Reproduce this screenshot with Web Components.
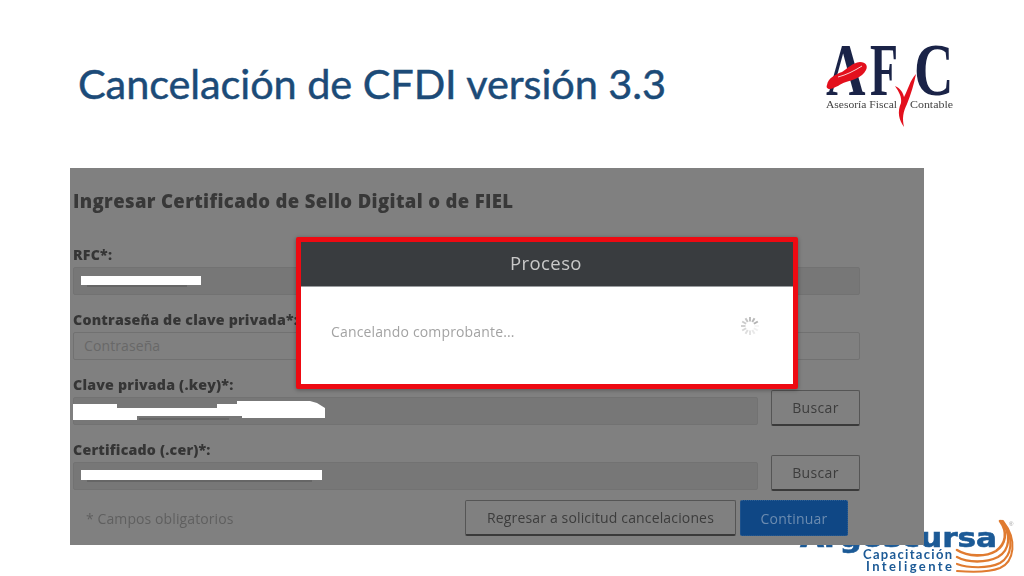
<!DOCTYPE html>
<html lang="es">
<head>
<meta charset="utf-8">
<title>Cancelación de CFDI versión 3.3</title>
<style>
html, body { margin: 0; padding: 0; background: #fff; }
</style>
</head>
<body>
<slide-page>
    <slide-title slot="head">Cancelación de CFDI versión 3.3</slide-title>
    <afc-logo slot="head"></afc-logo>
    <cert-panel slot="panel">
        <panel-heading>Ingresar Certificado de Sello Digital o de FIEL</panel-heading>
        <form-field label="RFC*:" mark="rfc"></form-field>
        <form-field label="Contraseña de clave privada*:" placeholder="Contraseña"></form-field>
        <form-field label="Clave privada (.key)*:" mark="key" button="Buscar"></form-field>
        <form-field label="Certificado (.cer)*:" mark="cer" button="Buscar"></form-field>
        <form-actions></form-actions>
        <process-modal slot="over"></process-modal>
    </cert-panel>
    <brand-footer slot="foot"></brand-footer>
</slide-page>

<script>
const pageTemplate = document.createElement('template');
pageTemplate.innerHTML = `
<style>
:host {
    display: block;
    position: relative;
    width: 1024px;
    height: 576px;
    overflow: hidden;
    background: #fff;
}
.head {
    display: flex;
    justify-content: space-between;
    align-items: flex-start;
    height: 168px;
    padding: 0 64px 0 78px;
    box-sizing: border-box;
}
.panel {
    position: relative;
    z-index: 1;
    margin-left: 70px;
    width: 854px;
}
</style>
<div class="head"><slot name="head"></slot></div>
<div class="panel"><slot name="panel"></slot></div>
<slot name="foot"></slot>
`;

class SlidePage extends HTMLElement {
    constructor() {
        super();
        this.attachShadow({ mode: 'open' });
        this.shadowRoot.appendChild(pageTemplate.content.cloneNode(true));
    }
}

const titleTemplate = document.createElement('template');
titleTemplate.innerHTML = `
<style>
:host {
    display: block;
    margin-top: 56px;
    font: 400 41.5px/54px Lato, "Open Sans", sans-serif;
    letter-spacing: -0.1px;
    -webkit-text-stroke: 0.45px #1c4b78;
    color: #1c4b78;
    white-space: nowrap;
}
</style>
<slot></slot>
`;

class SlideTitle extends HTMLElement {
    constructor() {
        super();
        this.attachShadow({ mode: 'open' });
        this.shadowRoot.appendChild(titleTemplate.content.cloneNode(true));
    }
}

const logoTemplate = document.createElement('template');
logoTemplate.innerHTML = `
<style>
:host {
    display: block;
    width: 140px;
    height: 116px;
    margin-top: 16px;
}
svg { display: block; filter: blur(0.35px); }
text { font-family: "Liberation Serif", serif; }
.big { font-size: 74px; font-weight: 700; fill: #1a2347; }
</style>
<svg width="140" height="116" viewBox="820 16 140 116">
    <text class="big" transform="translate(826 95) scale(.74 1)">A</text>
    <text class="big" transform="translate(870 95) scale(.62 1)">F</text>
    <text class="big" transform="translate(914 95) scale(.74 1)">C</text>
    <path d="M827 85 C828 78 836 74 842 72 C848 68 852 63 860 62 C866 62 868 66 866 70 C862 78 852 80 846 82 C840 84 836 88 830 89 C827 89 826 87 827 85Z" fill="#e3101d"/>
    <path d="M838 77 C846 75 854 71 862 66" fill="none" stroke="#fff" stroke-width="0.8"/>
    <text x="826" y="108" font-size="11.4" fill="#444" textLength="71" lengthAdjust="spacingAndGlyphs">Asesoría Fiscal</text>
    <text x="910" y="108" font-size="11.4" fill="#444" textLength="43" lengthAdjust="spacingAndGlyphs">Contable</text>
    <path d="M895 86 C899 88 902 90 904 97 C908 90 910 80 916 74 C914 84 911 94 907 104 C903 112 902 118 904 127 C899 120 897 112 901 103 C902 97 899 92 895 86Z" fill="#e3101d"/>
</svg>
`;

class AfcLogo extends HTMLElement {
    constructor() {
        super();
        this.attachShadow({ mode: 'open' });
        this.shadowRoot.appendChild(logoTemplate.content.cloneNode(true));
    }
}

const panelTemplate = document.createElement('template');
panelTemplate.innerHTML = `
<style>
:host {
    display: block;
    position: relative;
    height: 377px;
    background: #808080;
    font-family: "Open Sans", sans-serif;
}
.body {
    display: flex;
    flex-direction: column;
    height: 100%;
    padding: 0 64px 0 3px;
    box-sizing: border-box;
    filter: blur(0.5px);
}
</style>
<div class="body"><slot></slot></div>
<slot name="over"></slot>
`;

class CertPanel extends HTMLElement {
    constructor() {
        super();
        this.attachShadow({ mode: 'open' });
        this.shadowRoot.appendChild(panelTemplate.content.cloneNode(true));
    }
}

const headingTemplate = document.createElement('template');
headingTemplate.innerHTML = `
<style>
:host {
    display: block;
    padding-top: 20px;
    height: 78px;
    box-sizing: border-box;
    font: 800 18.5px/26px "Open Sans", sans-serif;
    letter-spacing: 0.36px;
    color: #383838;
    white-space: nowrap;
}
</style>
<slot></slot>
`;

class PanelHeading extends HTMLElement {
    constructor() {
        super();
        this.attachShadow({ mode: 'open' });
        this.shadowRoot.appendChild(headingTemplate.content.cloneNode(true));
    }
}

const fieldTemplate = document.createElement('template');
fieldTemplate.innerHTML = `
<style>
:host {
    display: block;
    height: 65px;
}
label {
    display: block;
    height: 21px;
    font: 800 14.2px/17px "Open Sans", sans-serif;
    letter-spacing: 0.2px;
    color: #353535;
    white-space: nowrap;
}
.row {
    display: grid;
    grid-template-columns: 1fr;
    grid-template-rows: 28px;
    column-gap: 13px;
    align-items: end;
}
.row.has-button { grid-template-columns: 1fr 89px; }
.input {
    position: relative;
    height: 28px;
    box-sizing: border-box;
    background: #777;
    border: 1px solid #727272;
    border-radius: 2px;
    padding-left: 10px;
    font: 400 14px/26px "Open Sans", sans-serif;
    letter-spacing: 0.1px;
    color: #686868;
}
.input.plain { background: #808080; border-color: #717171; }
.input svg { position: absolute; left: -1px; top: -1px; overflow: visible; }
button {
    height: 36px;
    margin-bottom: -1px;
    background: #808080;
    border: 1px solid #555;
    border-bottom: 2px solid #3a3a3a;
    border-radius: 2px;
    font: 400 14px "Open Sans", sans-serif;
    letter-spacing: 0.35px;
    color: #3c3c3c;
    padding: 0;
}
</style>
<label></label>
<div class="row">
    <div class="input"></div>
</div>
`;

// white blots that hide the personal data in the original capture
const MARKS = {
    rfc: '<rect x="8" y="9" width="120" height="9" fill="#fff"/><rect x="14" y="18" width="100" height="2" fill="#666"/>',
    key: '<path d="M0 7H44V11H144V7H164V4H237L244 6L252 11V21H169V19H64V23H0Z" fill="#fff"/><rect x="66" y="21" width="90" height="2" fill="#666"/>',
    cer: '<rect x="8" y="8" width="241" height="10" fill="#fff"/><rect x="14" y="18" width="225" height="2" fill="#666"/>'
};

class FormField extends HTMLElement {
    constructor() {
        super();
        this.attachShadow({ mode: 'open' });
        this.shadowRoot.appendChild(fieldTemplate.content.cloneNode(true));
    }

    connectedCallback() {
        const root = this.shadowRoot;
        root.querySelector('label').textContent = this.getAttribute('label');
        const input = root.querySelector('.input');
        if (this.hasAttribute('placeholder')) {
            input.textContent = this.getAttribute('placeholder');
            input.classList.add('plain');
        }
        if (this.hasAttribute('mark')) {
            input.innerHTML = `<svg width="10" height="10">${MARKS[this.getAttribute('mark')]}</svg>`;
        }
        if (this.hasAttribute('button')) {
            const btn = document.createElement('button');
            btn.textContent = this.getAttribute('button');
            root.querySelector('.row').classList.add('has-button');
            root.querySelector('.row').appendChild(btn);
        }
    }
}

const actionsTemplate = document.createElement('template');
actionsTemplate.innerHTML = `
<style>
:host {
    display: flex;
    align-items: center;
    height: 36px;
    margin-top: -6px;
    padding-left: 13px;
    margin-right: -1px;
    font: 400 14px "Open Sans", sans-serif;
}
.note { flex: 1; color: #5f5f5f; letter-spacing: 0.1px; }
button {
    height: 36px;
    box-sizing: border-box;
    border-radius: 2px;
    font: 400 14px "Open Sans", sans-serif;
    padding: 0;
}
.back {
    width: 271px;
    background: #808080;
    border: 1px solid #555;
    border-bottom: 2px solid #3a3a3a;
    color: #3c3c3c;
    letter-spacing: 0.15px;
}
.next {
    width: 108px;
    margin-left: 4px;
    margin-right: 13px;
    background: #0f4785;
    border: 1px dotted #2e5f94;
    color: #6c8cb0;
    letter-spacing: 0.2px;
}
</style>
<span class="note">* Campos obligatorios</span>
<button class="back">Regresar a solicitud cancelaciones</button>
<button class="next">Continuar</button>
`;

class FormActions extends HTMLElement {
    constructor() {
        super();
        this.attachShadow({ mode: 'open' });
        this.shadowRoot.appendChild(actionsTemplate.content.cloneNode(true));
    }
}

const modalTemplate = document.createElement('template');
modalTemplate.innerHTML = `
<style>
:host {
    display: flex;
    flex-direction: column;
    position: absolute;
    left: 226px;
    top: 69px;
    width: 502px;
    height: 152px;
    box-sizing: border-box;
    border: 5px solid #ee0a12;
    border-radius: 2px;
    box-shadow: 0 1px 4px rgba(0, 0, 0, 0.35);
    background: #fff;
    font-family: "Open Sans", sans-serif;
}
header {
    height: 45px;
    flex: none;
    background: #393c3f;
    border-bottom: 1px solid #9a9da0;
    box-sizing: border-box;
    display: flex;
    align-items: center;
    justify-content: center;
    font-size: 18.5px;
    letter-spacing: 0.4px;
    color: #c9c9c9;
    padding: 0 2px 3px 0;
    filter: blur(0.4px);
}
.content {
    flex: 1;
    display: flex;
    align-items: center;
    justify-content: space-between;
    padding: 0 33px 0 30px;
    font-size: 14px;
    letter-spacing: 0.15px;
    color: #a3a3a3;
    filter: blur(0.4px);
}
.content span { margin-top: -8px; }
svg { margin-top: -20px; }
</style>
<header>Proceso</header>
<div class="content">
    <span>Cancelando comprobante...</span>
    <svg width="20" height="20" viewBox="-10 -10 20 20" id="spin"></svg>
</div>
`;

class ProcessModal extends HTMLElement {
    constructor() {
        super();
        this.attachShadow({ mode: 'open' });
        this.shadowRoot.appendChild(modalTemplate.content.cloneNode(true));
        // twelve ticks, fading round the circle
        const ticks = [];
        for (let i = 0; i < 12; i++) {
            const o = (0.06 + 0.04 * ((i + 9) % 12)).toFixed(2);
            ticks.push(`<rect x="-1" y="-9" width="2" height="4.5" fill="#666" opacity="${o}" transform="rotate(${i * 30})"/>`);
        }
        this.shadowRoot.getElementById('spin').innerHTML = ticks.join('');
    }
}

const footTemplate = document.createElement('template');
footTemplate.innerHTML = `
<style>
:host {
    display: block;
    position: absolute;
    left: 0;
    top: 0;
    width: 1024px;
    height: 576px;
}
svg { display: block; filter: blur(0.3px); }
</style>
<svg width="1024" height="576" viewBox="0 0 1024 576">
    <text x="800" y="547" font-family="'DejaVu Sans', sans-serif" font-weight="700" font-size="26" fill="#1c5a96" stroke="#1c5a96" stroke-width="0.6" textLength="197" lengthAdjust="spacingAndGlyphs">Argoscursa</text>
    <text x="863" y="559" font-family="Lato, sans-serif" font-weight="700" font-size="13" fill="#1c5a96" textLength="89" lengthAdjust="spacing">Capacitación</text>
    <text x="866" y="571" font-family="Lato, sans-serif" font-weight="700" font-size="13" fill="#1c5a96" textLength="86" lengthAdjust="spacing">Inteligente</text>
    <g fill="none" stroke="#e07b30" stroke-linecap="round">
        <path d="M1000 521 C1008 532 1006 544 996 551 C986 557 968 557 957 550" stroke-width="2.6"/>
        <path d="M1001 521 C1012 534 1010 550 998 557 C986 563 968 563 957 557" stroke-width="2.4"/>
        <path d="M1002 521 C1015 538 1012 556 1000 563 C988 569 968 568 957 564" stroke-width="2.2"/>
        <path d="M1003 521 C1018 540 1014 562 1000 568 C990 572 970 572 957 571" stroke-width="2"/>
    </g>
    <text x="1009" y="526" font-family="'Liberation Sans', sans-serif" font-size="6" fill="#999">®</text>
</svg>
`;

class BrandFooter extends HTMLElement {
    constructor() {
        super();
        this.attachShadow({ mode: 'open' });
        this.shadowRoot.appendChild(footTemplate.content.cloneNode(true));
    }
}

customElements.define('slide-page', SlidePage);
customElements.define('slide-title', SlideTitle);
customElements.define('afc-logo', AfcLogo);
customElements.define('cert-panel', CertPanel);
customElements.define('panel-heading', PanelHeading);
customElements.define('form-field', FormField);
customElements.define('form-actions', FormActions);
customElements.define('process-modal', ProcessModal);
customElements.define('brand-footer', BrandFooter);
</script>
</body>
</html>
